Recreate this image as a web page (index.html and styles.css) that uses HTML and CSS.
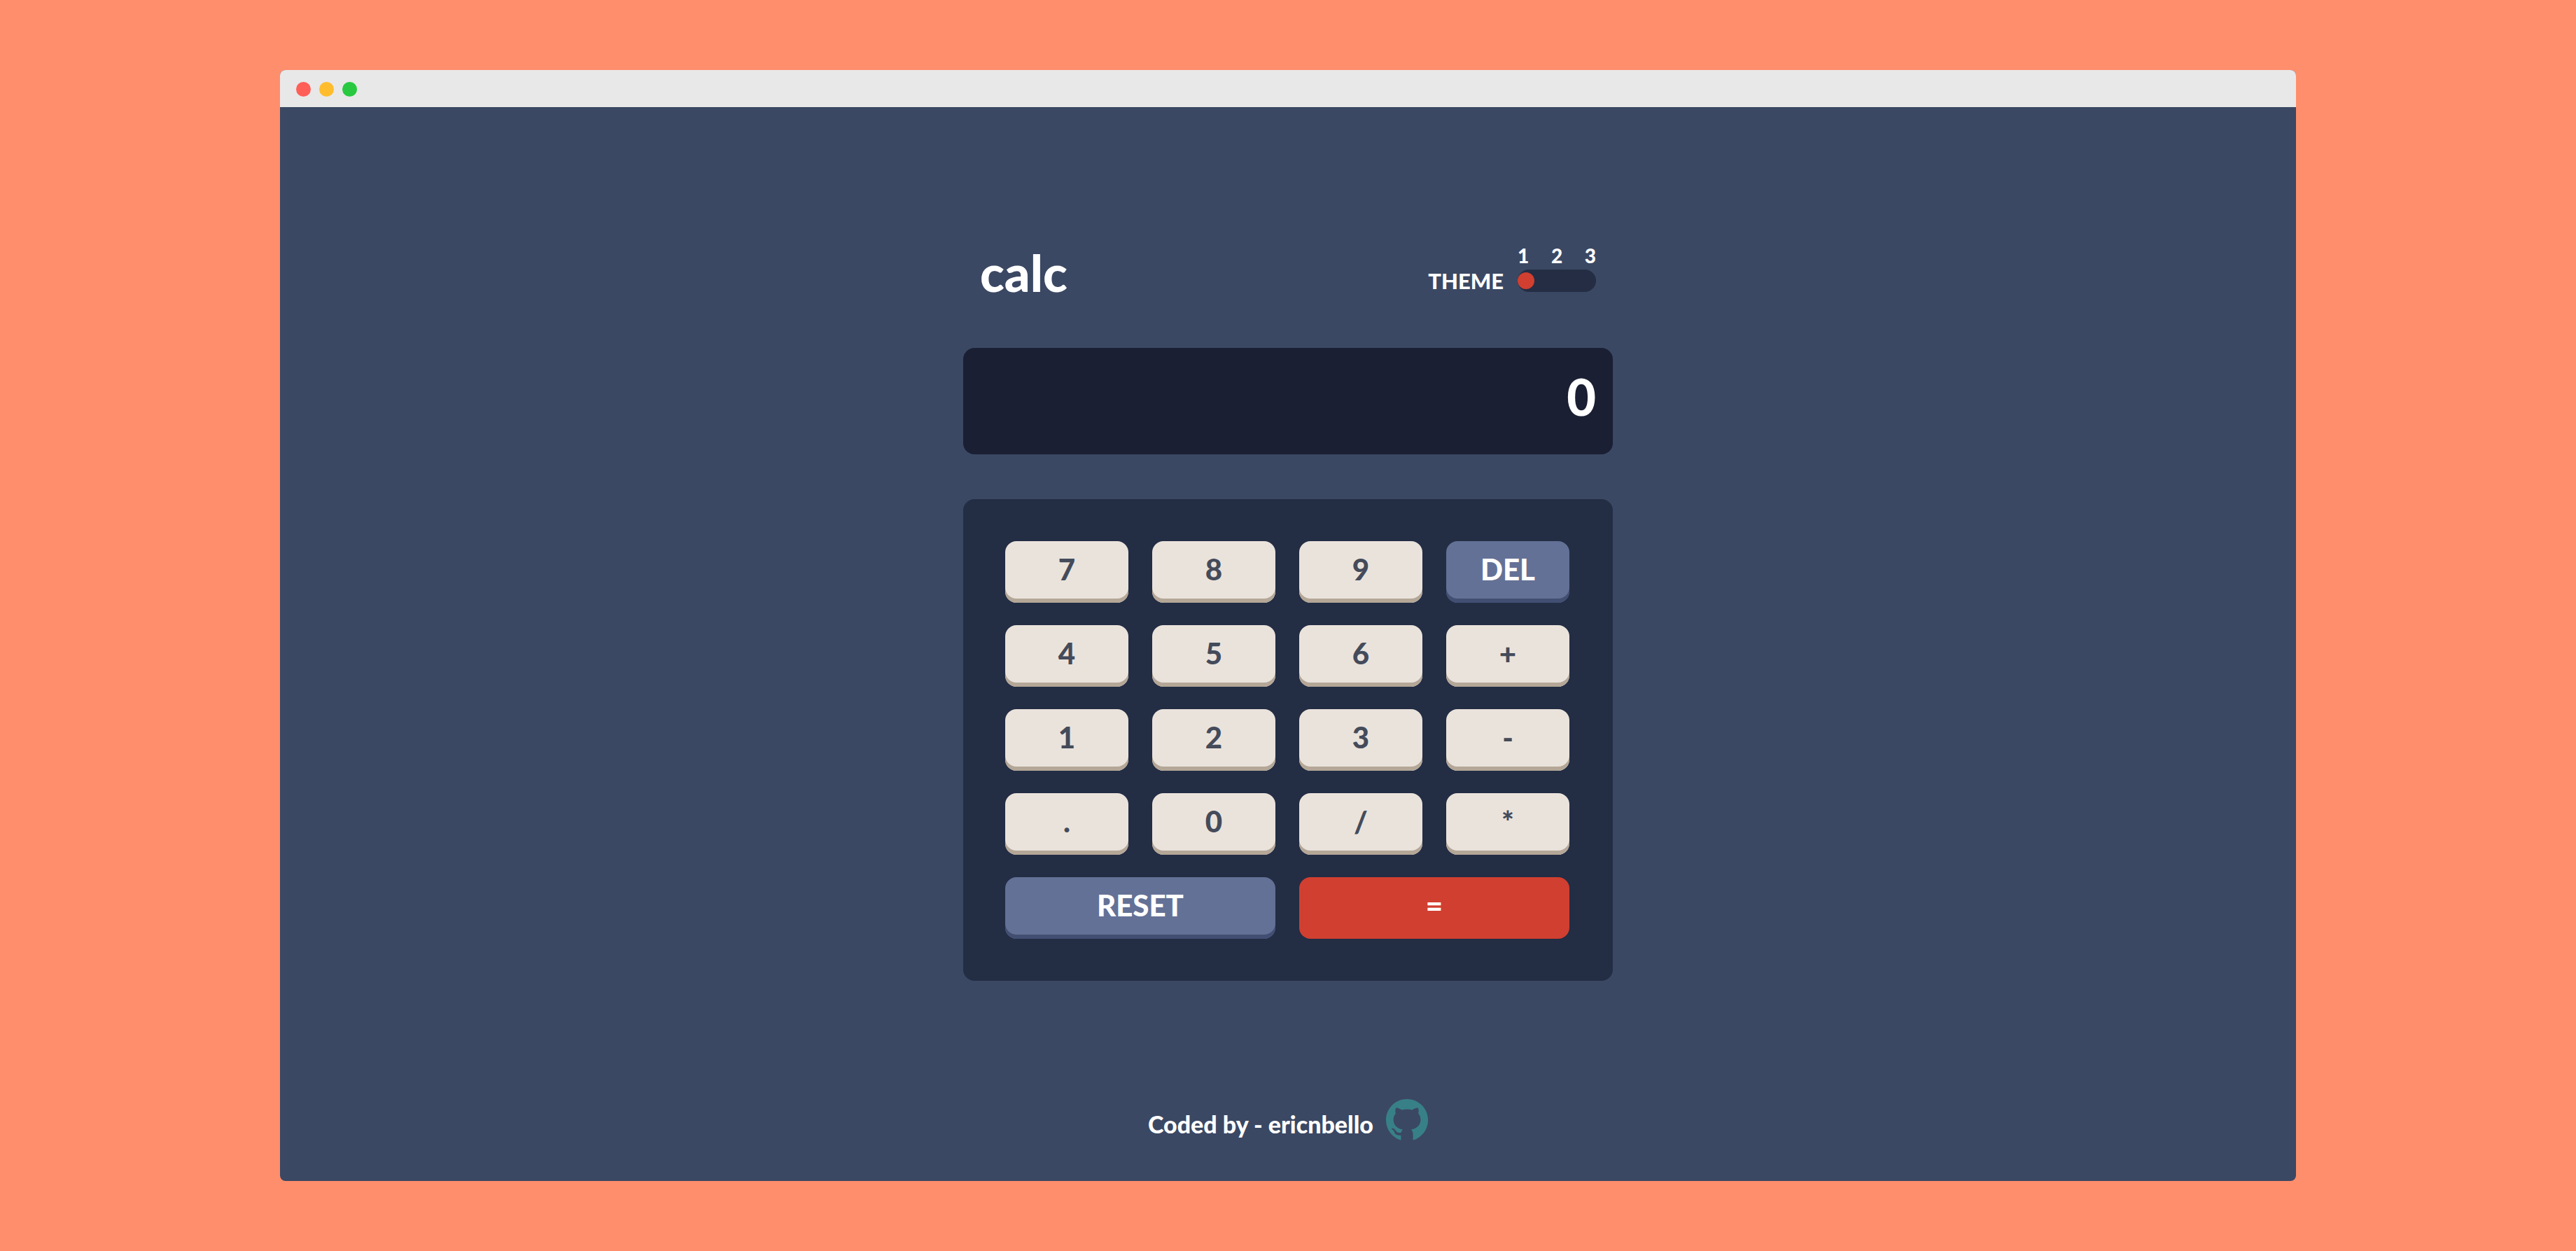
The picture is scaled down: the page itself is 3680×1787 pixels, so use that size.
FILE: index.html
```html
<!DOCTYPE html>
<html lang="en">
<head>
  <meta charset="utf-8">
  <meta name="viewport" content="width=device-width, initial-scale=1">
  <title>calc</title>
  <link rel="stylesheet" href="styles.css">
</head>
<body>
  <div class="window">
    <div class="titlebar">
      <span class="dot dot-close"></span>
      <span class="dot dot-minimize"></span>
      <span class="dot dot-zoom"></span>
    </div>
    <div class="app">
      <main class="calculator">
        <header class="header">
          <h1 class="logo">calc</h1>
          <div class="theme">
            <label class="theme-label" for="theme">THEME</label>
            <div class="switch">
              <div class="switch-numbers"><span>1</span><span>2</span><span>3</span></div>
              <input class="switch-track" id="theme" type="range" min="1" max="3" step="1" value="1">
            </div>
          </div>
        </header>
        <output class="screen">0</output>
        <div class="keypad">
          <button class="key" type="button">7</button>
          <button class="key" type="button">8</button>
          <button class="key" type="button">9</button>
          <button class="key key-action" type="button">DEL</button>
          <button class="key" type="button">4</button>
          <button class="key" type="button">5</button>
          <button class="key" type="button">6</button>
          <button class="key" type="button">+</button>
          <button class="key" type="button">1</button>
          <button class="key" type="button">2</button>
          <button class="key" type="button">3</button>
          <button class="key" type="button">-</button>
          <button class="key" type="button">.</button>
          <button class="key" type="button">0</button>
          <button class="key" type="button">/</button>
          <button class="key" type="button">*</button>
          <button class="key key-action key-wide" type="button">RESET</button>
          <button class="key key-equals key-wide" type="button">=</button>
        </div>
      </main>
      <footer class="footer">
        <p class="credit">Coded by - ericnbello</p>
        <a class="github" href="#" aria-label="GitHub">
          <svg class="github-icon" viewBox="64 76 895 895" aria-hidden="true"><path d="M511.6 76.3C264.3 76.2 64 276.4 64 523.5 64 718.9 189.3 885 363.8 946c23.5 5.9 19.9-10.8 19.9-22.2v-77.5c-135.7 15.9-141.2-73.9-150.3-88.9C215 726 171.5 718 184.5 703c30.9-15.9 62.4 4 98.9 57.9 26.4 39.1 77.9 32.5 104 26 5.7-23.5 17.9-44.5 34.7-60.8-140.6-25.2-199.2-111-199.2-213 0-49.5 16.3-95 48.3-131.7-20.4-60.5 1.9-112.3 4.9-120 58.1-5.2 118.5 41.6 123.2 45.3 33-8.9 70.7-13.6 112.9-13.6 42.4 0 80.2 4.9 113.5 13.9 11.3-8.6 67.3-48.8 121.3-43.9 2.9 7.7 24.7 58.3 5.5 118 32.4 36.8 48.9 82.7 48.9 132.3 0 102.2-59 188.1-200 212.9a127.5 127.5 0 0 1 38.1 91v112.5c.8 9 0 17.9 15 17.9 177.1-59.7 304.6-227 304.6-424.1 0-247.2-200.4-447.3-447.5-447.3z"/></svg>
        </a>
      </footer>
    </div>
  </div>
</body>
</html>
```
FILE: styles.css
```css
* {
  box-sizing: border-box;
}

body {
  margin: 0;
  min-height: 100vh;
  display: flex;
  padding: 100px clamp(0px, calc(50vw - 1440px), 400px);
  background: #ff8e6c;
  color: #fff;
  font-family: Lato, "Liberation Sans", sans-serif;
  font-weight: 900;
}

.window {
  flex: 1;
  display: flex;
  flex-direction: column;
  border-radius: 8px;
  overflow: hidden;
  background: #3b4863;
}

.titlebar {
  display: flex;
  gap: 12px;
  padding: 17px 23px 15px;
  background: #e8e8e8;
}

.dot {
  width: 21px;
  height: 21px;
  border-radius: 50%;
}

.dot-close { background: #ff5f57; }
.dot-minimize { background: #ffbd2e; }
.dot-zoom { background: #28c940; }

.app {
  flex: 1;
  display: flex;
  flex-direction: column;
  align-items: center;
  justify-content: space-between;
  gap: 64px;
  padding: 196px 24px 57px;
}

.calculator {
  width: 100%;
  max-width: 928px;
}

.header {
  display: flex;
  align-items: flex-start;
  justify-content: space-between;
  margin-bottom: 68px;
  padding: 0 24px;
}

.logo {
  margin: 0;
  font-size: 72px;
  font-weight: 900;
  line-height: 80px;
}

.theme {
  display: flex;
  align-items: flex-end;
  gap: 20px;
}

.theme-label {
  font-size: 31px;
  line-height: 32px;
}

.switch {
  display: flex;
  flex-direction: column;
  gap: 4px;
  width: 112px;
}

.switch-numbers {
  display: flex;
  justify-content: space-between;
  font-size: 28px;
  line-height: 32px;
}

.switch-track {
  appearance: none;
  width: 100%;
  height: 32px;
  margin: 0;
  border-radius: 16px;
  background: #242d44;
}

.switch-track::-webkit-slider-thumb {
  appearance: none;
  width: 24px;
  height: 24px;
  border-radius: 50%;
  background: #d03f30;
}

.switch-track::-moz-range-thumb {
  width: 24px;
  height: 24px;
  border: 0;
  border-radius: 50%;
  background: #d03f30;
}

.screen {
  display: block;
  margin-bottom: 64px;
  padding: 29px 24px 43px;
  border-radius: 16px;
  background: #1a1f33;
  font-size: 72px;
  line-height: 80px;
  text-align: right;
}

.keypad {
  display: grid;
  grid-template-columns: repeat(4, 1fr);
  gap: 32px 34px;
  padding: 60px 62px 60px 60px;
  border-radius: 16px;
  background: #232d44;
}

.key {
  height: 88px;
  padding: 0 0 8px;
  border: 0;
  border-radius: 16px;
  background: #eae3dc;
  box-shadow: inset 0 -6px #b4a797;
  color: #444b5a;
  font: inherit;
  font-size: 42px;
}

.key-action {
  background: #647196;
  box-shadow: inset 0 -6px #424f73;
  color: #fff;
}

.key-equals {
  background: #d03f30;
  box-shadow: none;
  color: #fff;
}

.key-wide {
  grid-column: span 2;
}

.footer {
  display: flex;
  align-items: center;
  gap: 18px;
}

.credit {
  margin: 0;
  padding-top: 12px;
  font-size: 34px;
  line-height: 40px;
}

.github,
.github-icon {
  display: block;
  width: 60px;
  height: 60px;
}

.github-icon {
  fill: #388087;
}
```
